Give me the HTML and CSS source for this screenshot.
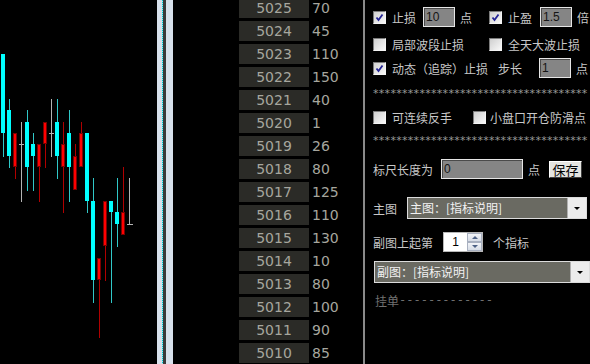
FILE: index.html
```html
<!DOCTYPE html>
<html lang="zh-CN">
    <head>
        <meta charset="UTF-8">
        <title>交易面板</title>
        <link rel="stylesheet" href="styles.css">
    </head>
    <body>
        <svg class="chart" width="157" height="364" viewBox="0 0 157 364">
            <g class="up">
                <rect class="wk" x="3" y="54" width="1" height="103"/><rect x="1" y="54" width="4" height="79"/>
                <rect class="wk" x="9" y="99" width="1" height="69"/><rect x="7" y="110" width="4" height="46"/>
                <rect class="wk" x="27" y="110" width="1" height="81"/><rect x="25" y="122" width="4" height="45"/>
                <rect class="wk" x="33" y="133" width="1" height="58"/><rect x="31" y="144" width="4" height="12"/>
                <rect class="wk" x="57" y="99" width="1" height="80"/><rect x="55" y="122" width="4" height="34"/>
                <rect class="wk" x="69" y="110" width="1" height="92"/><rect x="67" y="133" width="4" height="34"/>
                <rect class="wk" x="87" y="133" width="1" height="80"/><rect x="85" y="133" width="4" height="68"/>
                <rect class="wk" x="93" y="178" width="1" height="125"/><rect x="91" y="201" width="4" height="79"/>
                <rect class="wk" x="111" y="201" width="1" height="102"/><rect x="109" y="201" width="4" height="11"/>
                <rect class="wk" x="117" y="178" width="1" height="69"/><rect x="115" y="212" width="4" height="12"/>
            </g>
            <g class="down">
                <rect class="wk" x="15" y="133" width="1" height="46"/><rect x="13.5" y="133.5" width="3" height="33"/>
                <rect class="wk" x="39" y="144" width="1" height="58"/><rect x="37.5" y="144.5" width="3" height="22"/>
                <rect class="wk" x="45" y="122" width="1" height="46"/><rect x="43.5" y="122.5" width="3" height="21"/>
                <rect class="wk" x="63" y="122" width="1" height="91"/><rect x="61.5" y="144.5" width="3" height="22"/>
                <rect class="wk" x="75" y="144" width="1" height="46"/><rect x="73.5" y="156.5" width="3" height="33"/>
                <rect class="wk" x="81" y="122" width="1" height="45"/><rect x="79.5" y="133.5" width="3" height="33"/>
                <rect class="wk" x="99" y="258" width="1" height="80"/><rect x="97.5" y="258.5" width="3" height="21"/>
                <rect class="wk" x="105" y="201" width="1" height="80"/><rect x="103.5" y="201.5" width="3" height="44"/>
                <rect class="wk" x="123" y="167" width="1" height="68"/><rect x="121.5" y="212.5" width="3" height="22"/>
            </g>
            <g class="flat">
                <rect x="21" y="122" width="1" height="80"/><rect x="19" y="144" width="5" height="1"/>
                <rect x="51" y="99" width="1" height="58"/><rect x="49" y="133" width="5" height="1"/>
                <rect x="129" y="178" width="1" height="46"/><rect x="127" y="224" width="6" height="1"/>
            </g>
        </svg>

        <div class="split"><i class="a"></i><i class="b"></i><i class="c"></i><i class="d"></i></div>

        <div class="quotes">
            <div class="q"><span class="p">5025</span><span class="v">70</span></div>
            <div class="q"><span class="p">5024</span><span class="v">45</span></div>
            <div class="q"><span class="p">5023</span><span class="v">110</span></div>
            <div class="q"><span class="p">5022</span><span class="v">150</span></div>
            <div class="q"><span class="p">5021</span><span class="v">40</span></div>
            <div class="q"><span class="p">5020</span><span class="v">1</span></div>
            <div class="q"><span class="p">5019</span><span class="v">26</span></div>
            <div class="q"><span class="p">5018</span><span class="v">80</span></div>
            <div class="q"><span class="p">5017</span><span class="v">125</span></div>
            <div class="q"><span class="p">5016</span><span class="v">110</span></div>
            <div class="q"><span class="p">5015</span><span class="v">130</span></div>
            <div class="q"><span class="p">5014</span><span class="v">10</span></div>
            <div class="q"><span class="p">5013</span><span class="v">80</span></div>
            <div class="q"><span class="p">5012</span><span class="v">100</span></div>
            <div class="q"><span class="p">5011</span><span class="v">90</span></div>
            <div class="q"><span class="p">5010</span><span class="v">85</span></div>
        </div>

        <div class="vline"></div>

        <div class="panel">
            <div class="row r1">
                <span class="cb"><svg viewBox="0 0 11 11"><path d="M2.5 5.5 L4.5 8 L8.5 2.5"/></svg></span>
                <span class="lbl">止损</span>
                <span class="inp in-sl">10</span>
                <span class="unit">点</span>
                <span class="cb cb2"><svg viewBox="0 0 11 11"><path d="M2.5 5.5 L4.5 8 L8.5 2.5"/></svg></span>
                <span class="lbl">止盈</span>
                <span class="inp in-tp">1.5</span>
                <span class="unit">倍</span>
            </div>
            <div class="row r2">
                <span class="cb"></span>
                <span class="lbl">局部波段止损</span>
                <span class="cb cb2 wide"></span>
                <span class="lbl">全天大波止损</span>
            </div>
            <div class="row r3">
                <span class="cb"><svg viewBox="0 0 11 11"><path d="M2.5 5.5 L4.5 8 L8.5 2.5"/></svg></span>
                <span class="lbl">动态（追踪）止损</span>
                <span class="step">步长</span>
                <span class="inp in-step">1</span>
                <span class="unit">点</span>
            </div>
            <div class="stars s1">*************************************</div>
            <div class="row r4">
                <span class="cb"></span>
                <span class="lbl">可连续反手</span>
                <span class="cb cb3"></span>
                <span class="lbl lbl-near">小盘口开仓防滑点</span>
            </div>
            <div class="stars s2">*************************************</div>
            <div class="row r5">
                <span>标尺长度为</span>
                <span class="inp in-ruler">0</span>
                <span class="unit">点</span>
                <button class="btn">保存</button>
            </div>
            <div class="row r6">
                <span>主图</span>
                <div class="sel sel-main"><span class="txt">主图：[指标说明]</span><span class="arr"></span></div>
            </div>
            <div class="row r7">
                <span>副图上起第</span>
                <div class="spin"><span class="num">1</span><span class="btns"><i class="up"></i><i class="dn"></i></span></div>
                <span class="after">个指标</span>
            </div>
            <div class="row r8">
                <div class="sel sel-sub"><span class="txt">副图：[指标说明]</span><span class="arr"></span></div>
            </div>
            <div class="row r9">挂单<span class="dash">-------------</span></div>
        </div>
    </body>
</html>
```

FILE: styles.css
```css
body {
    margin: 0;
    width: 590px;
    height: 364px;
    overflow: hidden;
    background: #000;
    display: flex;
    font-family: "Noto Sans CJK SC", sans-serif;
}

/* candles */
.chart { display: block; flex: none; }
.up rect { fill: #00ffff; }
.up .wk { fill: #30c8c8; }
.down rect { fill: #ff0000; stroke: #7a0000; stroke-width: 1; }
.down .wk { fill: #b00000; stroke: none; }
.flat rect { fill: #b4b4b4; }

/* splitter */
.split { display: flex; width: 16px; flex: none; }
.split i { display: block; height: 100%; }
.split .a { width: 5px; background: #d8e1ec; }
.split .b { width: 1px; background: repeating-linear-gradient(#00c8d0 0 1px, #a8e4ec 1px 2px); }
.split .c { width: 3px; background: #3a3a3a; }
.split .d { width: 7px; background: #d8e1ec; }

/* price ladder */
.quotes {
    flex: none;
    width: 124px;
    margin-left: 66px;
    margin-top: -2px;
    display: flex;
    flex-direction: column;
    gap: 3px;
    font: 14px "DejaVu Sans", sans-serif;
    color: #a6a69e;
}
.q { display: flex; flex: none; height: 20px; line-height: 20px; }
.q .p { width: 70px; background: #2b2b27; text-align: center; }
.q .v { margin-left: 3px; }

.vline { flex: none; width: 2px; background: #8a8a8a; }

/* settings panel */
.panel {
    flex: 1;
    padding-left: 8px;
    display: flex;
    flex-direction: column;
    font-size: 12px;
    color: #c8c8c8;
    overflow: hidden;
}
.row { display: flex; align-items: center; height: 20px; flex: none; white-space: nowrap; }
.r1 { margin-top: 7px; }
.r2 { margin-top: 7px; }
.r3 { margin-top: 4px; }
.r4 { margin-top: 6px; }
.r5 { margin-top: 11px; }
.r6 { margin-top: 18px; height: 22px; }
.r7 { margin-top: 13px; }
.r8 { margin-top: 9px; height: 22px; margin-left: 1px; }
.r9 { margin-top: 9px; height: 16px; margin-left: 2px; color: #707070; }
.dash { font-family: "DejaVu Sans Mono", monospace; }

.stars {
    flex: none;
    height: 14px;
    line-height: 14px;
    font: 11px "DejaVu Sans", sans-serif;
    color: #9a9a9a;
    white-space: nowrap;
    letter-spacing: 0.3px;
}
.s1 { margin-top: 9px; }
.s2 { margin-top: 7px; }

.cb {
    box-sizing: border-box;
    width: 13px;
    height: 13px;
    flex: none;
    border: 1px solid;
    border-color: #7c7c7c #f4f4f4 #f4f4f4 #7c7c7c;
    background: linear-gradient(135deg, #cfcfcf, #f8f8f8);
}
.cb svg { display: block; width: 11px; height: 11px; }
.cb path { fill: none; stroke: #232395; stroke-width: 1.8; }
.cb2 { margin-left: 17px; }
.cb2.wide { margin-left: 25px; }
.cb3 { margin-left: 21px; }
.lbl { margin-left: 6px; }
.lbl-near { margin-left: 4px; }
.unit { margin-left: 5px; }
.step { margin-left: 10px; }

.inp {
    box-sizing: border-box;
    height: 20px;
    padding-left: 2px;
    border: 1px solid #e6e6e6;
    box-shadow: inset 1px 1px #4a4a4a;
    background: #858585;
    color: #151515;
    font: 12px "Liberation Sans", sans-serif;
    line-height: 18px;
}
.in-sl { width: 32px; margin-left: 7px; }
.in-tp { width: 32px; margin-left: 8px; }
.in-step { width: 32px; margin-left: 17px; }
.in-ruler { width: 82px; margin-left: 8px; }

.btn {
    box-sizing: border-box;
    width: 33px;
    height: 17px;
    margin-left: 9px;
    padding: 0;
    border: 1px solid;
    border-color: #ffffff #404040 #404040 #ffffff;
    background: #e4e4e0;
    color: #000;
    font: 13px "Noto Sans CJK SC", sans-serif;
    line-height: 15px;
}

.sel {
    box-sizing: border-box;
    display: flex;
    height: 22px;
    border: 1px solid #dcdcdc;
    background: #6a6a62;
    color: #f2f2f2;
}
.sel-main { width: 180px; margin-left: 10px; }
.sel-sub { width: 216px; }
.sel .txt { flex: 1; padding-left: 2px; line-height: 19px; }
.sel .arr {
    width: 18px;
    background: #ececec;
    border-left: 1px solid #b0b0b0;
    display: flex;
    align-items: center;
    justify-content: center;
}
.sel .arr::after {
    content: "";
    border-left: 3px solid transparent;
    border-right: 3px solid transparent;
    border-top: 3px solid #000;
}

.spin {
    box-sizing: border-box;
    display: flex;
    width: 40px;
    height: 20px;
    margin-left: 10px;
    background: #fff;
    border: 1px solid #b8b8b8;
}
.spin .num { flex: 1; text-align: center; color: #000; font: 12px "Liberation Sans", sans-serif; line-height: 18px; }
.spin .btns { width: 15px; display: flex; flex-direction: column; }
.spin .btns i {
    flex: 1;
    display: flex;
    align-items: center;
    justify-content: center;
    background: linear-gradient(#f2f4f8, #d6dce6);
    border: 1px solid #a8b0c0;
}
.spin .up::after { content: ""; border: 3px solid transparent; border-top: 0; border-bottom: 3px solid #4d6185; }
.spin .dn::after { content: ""; border: 3px solid transparent; border-bottom: 0; border-top: 3px solid #4d6185; }
.after { margin-left: 10px; }
```
